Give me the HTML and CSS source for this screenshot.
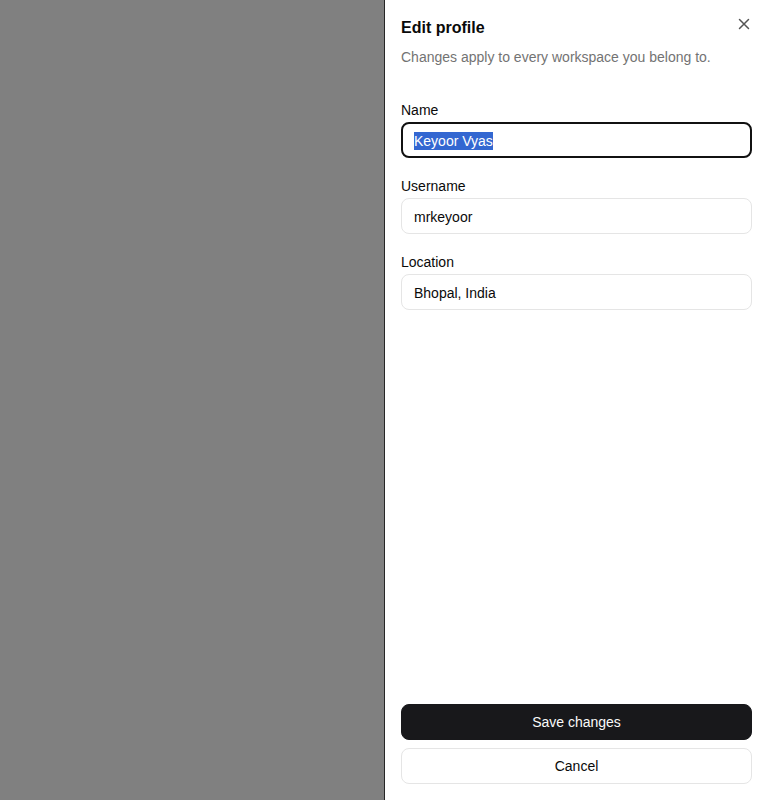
FILE: index.html
```html
<!DOCTYPE html>
<html lang="en">
<head>
<meta charset="utf-8">
<title>Edit profile</title>
<link rel="stylesheet" href="styles.css">
</head>
<body>
<div class="screen">
  <div class="backdrop"></div>
  <aside class="sheet" role="dialog" aria-labelledby="sheet-title">
    <header class="sheet-header">
      <h2 id="sheet-title" class="sheet-title">Edit profile</h2>
      <p class="sheet-desc">Changes apply to every workspace you belong to.</p>
      <button class="close-btn" type="button" aria-label="Close">
        <svg width="16" height="16" viewBox="0 0 16 16" fill="none" stroke="currentColor" stroke-width="1.5" stroke-linecap="round"><path d="M3.5 3.5l9 9M12.5 3.5l-9 9"/></svg>
      </button>
    </header>
    <div class="form">
      <div class="field">
        <label class="label">Name</label>
        <div class="input input-focused"><span class="selected">Keyoor Vyas</span></div>
      </div>
      <div class="field">
        <label class="label">Username</label>
        <div class="input">mrkeyoor</div>
      </div>
      <div class="field">
        <label class="label">Location</label>
        <div class="input">Bhopal, India</div>
      </div>
    </div>
    <footer class="sheet-footer">
      <button class="btn btn-primary" type="button">Save changes</button>
      <button class="btn btn-outline" type="button">Cancel</button>
    </footer>
  </aside>
</div>
</body>
</html>
```
FILE: styles.css
```css
* { box-sizing: border-box; }
html, body { margin: 0; padding: 0; }
body {
  font-family: "Liberation Sans", Arial, sans-serif;
  color: #0a0a0a;
  background: #808080;
}
.screen {
  display: flex;
  width: 768px;
  height: 800px;
}
.backdrop {
  flex: 1;
  background: #808080;
}
.sheet {
  position: relative;
  width: 384px;
  height: 800px;
  background: #ffffff;
  border-left: 1px solid #262626;
  padding: 16px;
  display: flex;
  flex-direction: column;
}
.sheet-header {
  display: flex;
  flex-direction: column;
  gap: 7px;
}
.sheet-title {
  margin: 0;
  font-size: 16px;
  line-height: 24px;
  font-weight: 700;
  color: #0a0a0a;
}
.sheet-desc {
  margin: 0;
  font-size: 14px;
  line-height: 20px;
  color: #737373;
}
.close-btn {
  position: absolute;
  top: 16px;
  right: 16px;
  width: 16px;
  height: 16px;
  padding: 0;
  border: 0;
  background: transparent;
  color: #555555;
  display: flex;
  align-items: center;
  justify-content: center;
}
.form {
  margin-top: 33px;
  display: flex;
  flex-direction: column;
  gap: 18px;
}
.field {
  display: flex;
  flex-direction: column;
  gap: 2px;
}
.label {
  font-size: 14px;
  line-height: 20px;
  color: #0a0a0a;
}
.input {
  height: 36px;
  border: 1px solid #e5e5e5;
  border-radius: 8px;
  padding: 1px 12px 0;
  display: flex;
  align-items: center;
  font-size: 14px;
  color: #0a0a0a;
}
.input-focused {
  border: 2px solid #111111;
  padding: 1px 11px 0;
}
.selected {
  background: #3367d1;
  color: #ffffff;
  line-height: 18px;
}
.sheet-footer {
  margin-top: auto;
  display: flex;
  flex-direction: column;
  gap: 8px;
}
.btn {
  height: 36px;
  border-radius: 8px;
  font-family: "Liberation Sans", Arial, sans-serif;
  font-size: 14px;
  cursor: pointer;
}
.btn-primary {
  background: #18181b;
  color: #fafafa;
  border: 1px solid #18181b;
}
.btn-outline {
  background: #ffffff;
  color: #0a0a0a;
  border: 1px solid #e5e5e5;
}
```
